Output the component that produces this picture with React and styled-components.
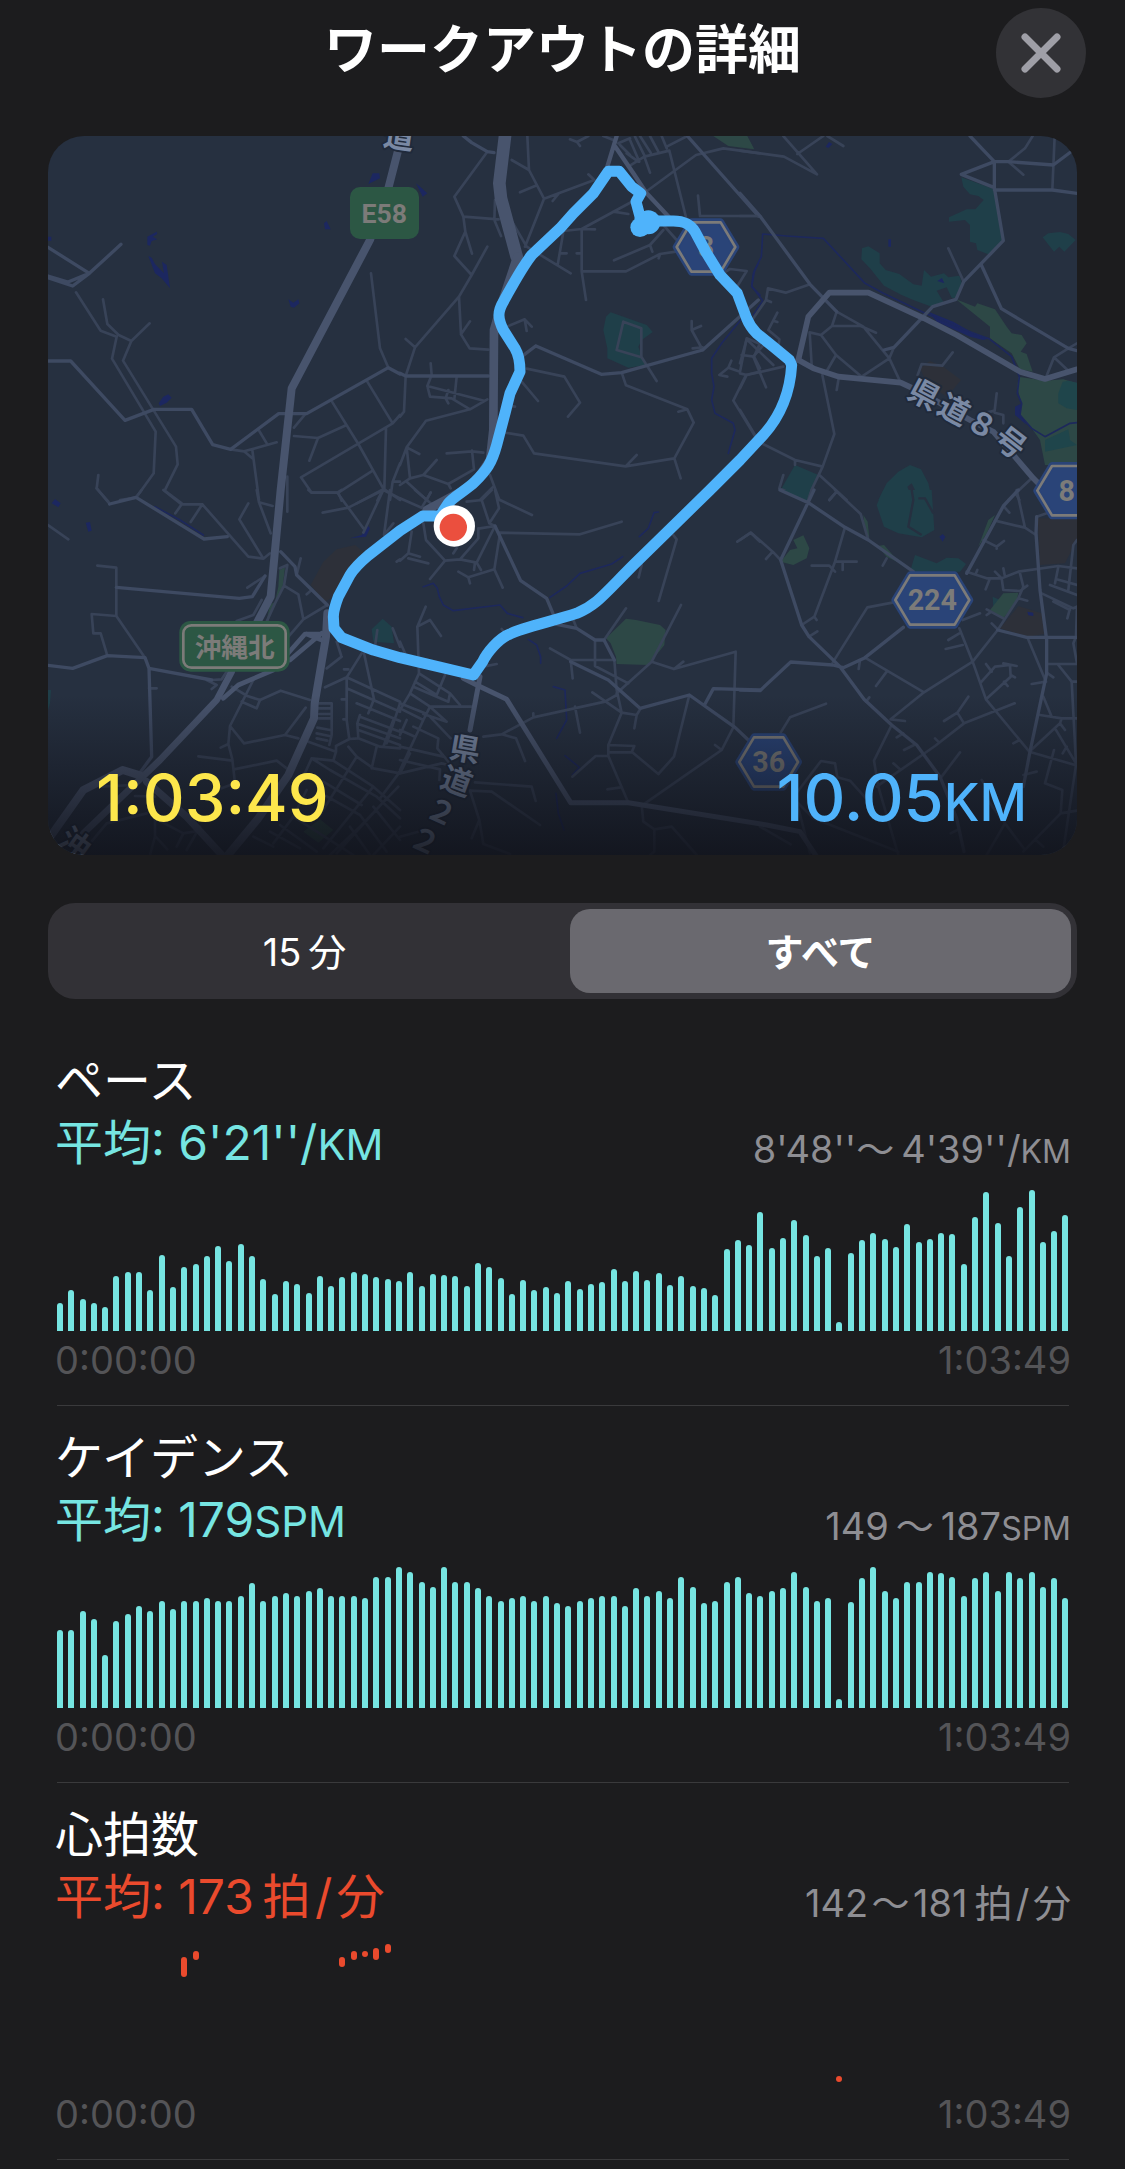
import React, { useState } from "react";
import styled, { createGlobalStyle } from "styled-components";

const GlobalStyle = createGlobalStyle`
  * {
    box-sizing: border-box;
  }

  body {
    margin: 0;
    background: #1c1c1e;
    color: #ffffff;
    font-family: Inter, "Noto Sans CJK JP", sans-serif;
  }

  h1, h2, p {
    margin: 0;
  }
`;

const Page = styled.main`
  padding-bottom: 9px;
`;

const Header = styled.header`
  display: grid;
  grid-template-columns: 90px 1fr 90px;
  padding: 8px 39px 38px;
`;

const Title = styled.h1`
  grid-column: 2;
  text-align: center;
  font-size: 53px;
  font-weight: 700;
  line-height: 84px;
`;

const CloseButton = styled.button`
  display: flex;
  justify-content: center;
  align-items: center;
  width: 90px;
  height: 90px;
  padding: 0;
  border: none;
  border-radius: 50%;
  background: #323236;
  color: #9f9fa7;
  cursor: pointer;
`;

const Content = styled.div`
  padding: 0 48px;
`;

const MapCard = styled.div`
  position: relative;
  overflow: hidden;
  border-radius: 36px;
  background: #263040;

  svg {
    display: block;
    width: 100%;
  }
`;

const MapSummary = styled.div`
  position: absolute;
  left: 0;
  right: 0;
  bottom: 0;
  display: flex;
  justify-content: space-between;
  align-items: flex-end;
  height: 160px;
  padding: 0 50px 17px 48px;
  background: linear-gradient(rgba(16, 18, 26, 0), rgba(16, 18, 26, 0.86));
`;

const MapValue = styled.p`
  color: ${(props) => props.$color};
  font-size: 65px;
  font-weight: 500;
  line-height: 80px;
`;

const Unit = styled.span`
  font-size: ${(props) => props.$size};
  line-height: 1;
`;

const Segments = styled.div`
  display: flex;
  gap: 15px;
  margin-top: 48px;
  padding: 6px;
  border-radius: 27px;
  background: #323136;
`;

const Segment = styled.button`
  flex: 1;
  height: 84px;
  padding: 0 0 4px;
  border: none;
  border-radius: 20px;
  background: ${(props) => (props.$active ? "#6a696f" : "transparent")};
  color: #ffffff;
  font-family: inherit;
  font-size: 38px;
  font-weight: ${(props) => (props.$active ? 700 : 400)};
  cursor: pointer;
`;

const SectionList = styled.div`
  margin-top: 30px;
`;

const Section = styled.section`
  margin: 0 8px 0 9px;
  padding: 21px 0 23px;
  border-bottom: 1px solid #3a3a3c;
`;

const SectionTitle = styled.h2`
  margin: 0 -2px;
  font-size: 48px;
  font-weight: 400;
  line-height: 62px;
`;

const StatRow = styled.div`
  display: flex;
  justify-content: space-between;
  align-items: flex-start;
  height: 62px;
  margin: 0 -2px;
`;

const Average = styled.p`
  color: ${(props) => props.$color};
  font-size: 48px;
  line-height: 62px;
`;

const Range = styled.p`
  color: #8e8e93;
  font-size: 38px;
  line-height: 74px;
`;

const Chart = styled.div`
  display: flex;
  justify-content: space-between;
  align-items: flex-end;
  height: 141px;
  margin-top: 16px;
`;

const Bar = styled.div`
  width: 6px;
  border-radius: ${(props) => (props.$floating ? "3px" : "3px 3px 0 0")};
  background: ${(props) => props.$color};
`;

const TimeAxis = styled.div`
  display: flex;
  justify-content: space-between;
  margin: 7px -2px 0;
  color: #545457;
  font-size: 38px;
  line-height: 44px;
`;

const TEAL = "#76e5e2";
const RED = "#ea4a2d";

const PACE = [
  28, 41, 32, 28, 24, 55, 59, 59, 41, 76, 44, 64, 67, 75, 85, 70, 87, 75, 52,
  37, 50, 47, 38, 55, 45, 54, 59, 57, 54, 52, 50, 59, 45, 57, 56, 55, 45, 68,
  64, 53, 37, 51, 41, 44, 38, 50, 42, 47, 49, 62, 50, 60, 51, 58, 46, 55, 45,
  43, 36, 82, 91, 86, 119, 83, 93, 111, 96, 75, 83, 9, 78, 91, 98, 92, 84, 107,
  89, 92, 98, 97, 67, 114, 139, 108, 75, 124, 141, 89, 100, 116,
];

const CADENCE = [
  78, 78, 97, 89, 53, 87, 94, 102, 97, 107, 99, 107, 107, 110, 107, 107, 112,
  125, 107, 112, 115, 112, 117, 120, 112, 112, 112, 110, 131, 131, 141, 136,
  126, 121, 141, 126, 126, 120, 112, 107, 110, 112, 107, 112, 105, 102, 107,
  110, 112, 112, 102, 120, 112, 117, 110, 131, 121, 105, 107, 126, 131, 115,
  112, 117, 120, 136, 121, 107, 110, 9, 106, 130, 141, 117, 110, 126, 126, 136,
  135, 131, 112, 130, 136, 117, 136, 130, 136, 121, 130, 110,
];

// slot: [low, length], the other slots have no heart rate sample
const HEART_SAMPLES = {
  11: [108, 20],
  12: [125, 9],
  25: [118, 10],
  26: [125, 9],
  27: [128, 6],
  28: [125, 12],
  29: [132, 9],
  69: [3, 6],
};

const HEART = Array.from({ length: 90 }, (_, i) => HEART_SAMPLES[i] || [0, 0]);

// \u2009 (thin) and \u200a (hair) spaces separate numbers and Japanese units
const SECTIONS = [
  {
    id: "pace",
    title: "ペース",
    color: TEAL,
    average: "6'21''/",
    range: "8'48''〜\u20094'39''/",
    unit: "KM",
    bars: PACE.map((value) => [0, value]),
  },
  {
    id: "cadence",
    title: "ケイデンス",
    color: TEAL,
    average: "179",
    range: "149\u2009〜\u2009187",
    unit: "SPM",
    bars: CADENCE.map((value) => [0, value]),
  },
  {
    id: "heart",
    title: "心拍数",
    color: RED,
    average: "173\u2009拍\u200a/\u200a分",
    range: "142\u200a〜\u200a181\u2009拍\u200a/\u200a分",
    unit: "",
    floating: true,
    bars: HEART,
  },
];

// the map is stored as six tiles, each with its own origin
const TILES = [
  {
    x: 0,
    y: 0,
    water:
      "M985 162L998 130H1018L1020 145ZM852 280L860 273L872 298L855 298ZM745 508L760 518L775 508L778 520L762 533L752 530ZM322 320L350 305L352 312L338 320L352 328L335 333L330 347L322 345ZM325 378L335 383L345 402L372 430L366 395L380 405L390 475L365 445L345 430ZM356 820L370 800L385 793L395 803L380 818L360 828ZM24 320H34V332H24Z",
    mid: "M24 352L148 430L243 343M24 438L84 456L148 430L98 468L24 443M24 693H92L255 871L342 838H455L518 944L572 958L716 851H800L1045 713L1080 732",
    minor:
      "M108 487L182 602L230 620L216 686L347 905L341 1030L288 1103L240 1110M189 508L202 582L236 615L274 633L329 580M274 633L249 692L408 950L413 1003L374 1082L425 1120M175 1035L170 1075L205 1115M572 958L612 964L710 937M656 900L682 943M612 964L637 985M637 960L657 1110M993 430L1020 655L1045 713M980 752L1058 880M876 815L955 942L1030 1076L1080 1110M762 918L834 924L918 886M834 924L808 992M762 893L797 851M1080 855L1058 880L783 1042L815 1088H895L998 1022M895 1088L905 1112M1038 895L1033 1076L950 1120M1030 1076L1012 1112M1080 1000L1058 1055H1080M1058 1055L1050 1110M742 1040V1145",
  },
  {
    x: 1080,
    y: 0,
    teal: "M632 547L740 585L758 606L725 630L715 650L735 705L685 713L622 685V655L610 600L618 560Z",
    green: "M940 18H1040L1062 58L985 48Z",
    water: "M48 160L62 172L82 190L68 200Z",
    stream:
      "M1075 400L1060 430L1055 470L1080 495M1022 570L965 640L935 685V730L942 770L935 810L945 850L1000 880L1005 900L985 970",
    mid: "M190 18L215 38L262 65L282 68M17 738H265M0 730L17 738M408 648L604 733L665 728L908 660L1075 510M407 648L365 680M862 18L1075 258",
    minor:
      "M262 65L163 200L190 260L296 268M190 260L196 305L216 371M196 305L163 378L215 435L262 350M215 435L177 500L45 652L17 738L12 845L0 860M177 500L183 613L209 655L265 659M183 613L210 574M17 627L45 652M285 210L283 270L303 318M382 18L387 120L432 206L375 350M335 90L387 120M432 206L583 150L565 133M458 213L475 192M360 187L405 168M310 230L380 350L512 430M490 305L473 405M480 370H500M530 370H545M490 303L545 297L700 213M545 297L585 298M640 245L685 252M545 297V424L558 510M545 424H678L780 372L828 365M780 372L776 385M642 391L750 345L757 365M750 345L790 300M510 28L531 36L565 18M531 36L540 48M700 213L888 75L970 55L1080 70M685 110L733 80L808 62L860 270M733 80L750 128M640 30L610 18M655 40L690 25M1075 258H900L894 197M690 30L718 95M705 20L735 80M720 18L752 68M750 18L775 65M785 18L800 55M800 50L862 18M660 45L690 75M680 70L715 95M790 285L830 330M325 588L374 568L395 590M374 568L380 603M908 660L875 600V573M875 600L903 588M908 652L878 655M665 728L678 766L862 838L881 878L823 985L842 1045M862 838L835 845M823 985L677 1009L402 970L370 917L315 908M677 1009L710 975M380 716L493 740L540 818L504 860M365 755L414 813M345 830L320 826M724 680L770 753M670 575L724 595V682L650 660ZM960 435L990 417L1040 423L1005 480M1075 640L1040 625L1020 725L985 713L958 735L982 740M985 713L994 692M1080 725L1038 735L1000 812L1065 918M1025 675L1062 680L1080 640M1062 680L1080 715M92 700L95 735L82 768L90 800L155 805L210 838L262 808M82 768L252 812M170 740L163 808M145 780L137 805L145 820M210 838L78 872L20 952L0 1005M20 952L58 972M20 952L30 1045L70 1035L110 990M70 1035L145 1062L222 1018L216 962M145 1062L152 1075M140 970L216 964L250 968M0 1065L30 1045M20 1055L80 1110M270 1035L298 1110M280 1070L240 1110M92 1087L80 1110",
  },
  {
    x: 2100,
    y: 0,
    teal: "M664 142L763 178L790 332L745 373L712 360L708 340L690 335V285L675 270L627 275V262L680 238H706L731 210L715 198L690 193L670 170ZM366 355L385 349L419 370V400L437 420L478 432L520 463L545 467L552 420L573 440L612 430L625 442L658 437L668 465L648 505L635 503L620 472L590 482L610 515L575 530L520 510L485 495L432 467L390 415L364 388ZM908 322L925 310L960 306L985 312L1007 330L973 365L958 350L942 365ZM415 1110L440 1060L475 1025L510 1005L543 1018L565 1060L576 1110H540L515 1060L502 1070L518 1110ZM165 1005L235 1035L205 1110L125 1075Z",
    green:
      "M0 18H22L42 56L0 50ZM648 508L705 530L712 520L765 538L800 590L815 610L845 615L860 640L842 665L860 672L878 725L840 718L815 670L750 625V590L700 550ZM835 740L915 752L970 748L1011 760V1005H915L900 930L875 895L838 855L845 820L832 775Z",
    pond: "M955 790L968 755L985 752L1011 758V840L980 835L955 820ZM915 930L985 898L990 930L1011 945L915 965Z",
    brown: "M540 715L570 693L610 710L663 750L630 790L620 800L560 760Z",
    water:
      "M257 50L267 36L277 42L265 54ZM445 328H453V350H445ZM592 453L606 444L613 460ZM565 545L640 575L700 610L750 625L730 630L690 620L590 575ZM825 830L845 820L840 850L860 885L825 855Z",
    stream:
      "M40 555L68 512L35 468L44 420L64 380L68 312L140 318L250 325L375 460L430 490L555 550L690 605L750 628L815 680L838 740L832 790L845 820L840 855L875 895L915 920L990 880L1011 878",
    mid: "M690 18L763 95H805L940 105L1000 60M763 95L664 133L763 173V95M763 180H937L1011 190M763 173L790 332L671 455L648 508L578 530L540 570L462 652L432 660M724 405L784 536L985 655L1011 662M0 190L60 258L210 463L290 545",
    minor:
      "M0 62L132 80L231 133L130 18M172 72L250 18M262 18L310 48M805 95L850 134M805 95L855 55L878 18M944 18L937 180M625 355L671 455M985 655L942 682L917 745M942 682L985 722M985 655L1011 640M290 545L370 590L448 685L482 758M0 258H60M210 463L137 488L84 475L78 510L40 565M78 510L93 516M290 545L276 588L243 615L209 607L215 705M276 588H362L408 608M243 615L288 675L365 740L448 685L462 652M288 675L262 720M247 735L283 912L248 1010L200 1110M0 840L45 915M45 930L165 990L248 1010M165 990V1005M290 780L296 745M638 667L607 707L545 702L533 735M770 790L764 842L730 850M764 848L790 855V880M112 548L85 600L118 628L115 650M100 572L112 576M20 628L0 700M40 680L85 628M40 680L78 772M20 628L100 705M0 730L20 735L130 710M0 775L20 735M238 1035L320 1110M290 1085L268 1110M130 1035L118 1075L190 1108M875 1045L805 1110M830 1095L838 1110",
  },
  {
    x: 0,
    y: 1080,
    teal: "M995 418L1028 386L1055 410L1062 460L1000 455ZM24 600H33L30 640L24 660Z",
    green:
      "M718 240L735 232L728 290L705 335L715 290ZM690 345L705 335L685 395L680 390ZM790 1025L840 988L880 1020L835 1058Z",
    brown: "M812 285L850 215L890 178L945 165L975 190L930 240L880 320L855 335Z",
    water:
      "M35 40L45 27L62 40L55 52ZM137 98L150 96L155 122L145 125ZM970 125L985 108L990 115L978 140L930 145L965 135Z",
    stream: "M345 50L420 90L490 135",
    mid: "M209 42L288 22L492 147L562 140M229 292L598 325L637 320L675 258M327 535L335 800L302 845M24 526L98 535L202 497L315 503L327 535L515 570M722 185L765 230L770 255L862 345",
    minor:
      "M170 -5L209 42M288 22L305 0M370 0L425 43L406 70M425 43H487L452 96M487 43L625 200L670 206L598 88L625 40M650 0L657 37L692 130M657 37L698 48M670 206L690 190M24 105L85 148M172 227L229 233V378L155 372L160 430H182L202 497M675 258L622 293M229 378L315 503M327 595H350M515 570L545 568L560 545M500 570L530 585L515 597M770 255L782 205M720 235L742 225L732 287L775 313L790 388M862 345L790 388L728 460M732 287L705 340L680 395M800 313L815 300M665 330L640 375L590 393M575 590L622 618L660 630L722 602L810 630M660 630L650 655L605 635M640 570L570 708L612 760L735 735L797 653M735 735L775 745M570 708L565 762L577 808L585 880L545 895M565 762L542 773M475 799L577 812M582 838L710 812L740 835M855 592L920 562M905 500L860 535M890 455L903 495M965 490L920 562V690L928 747L888 768M972 490L1002 628L985 670M920 562L1080 635M920 595L1080 665M950 640L1080 693M960 680L1080 725M960 675L952 700L955 745M955 720L1080 765M955 702L1080 745M928 747L955 745L1020 770L1080 775M905 628H920M910 688H920M912 538H925M1080 640L1040 760M1060 690L1030 770M835 640H875V735L868 765M835 655H875M838 672H870M835 685H870M832 713L870 720M830 730L868 738M830 745L862 752M805 755L888 785V768M888 785L880 812L815 805L790 860M925 770L950 800L1000 835L1080 850M1010 770L995 835M950 800L840 975M880 812L1000 890L1080 960M815 805L870 840L1010 920L1080 985M850 875L965 945M835 905L960 975M800 900L760 980L940 1095M720 1005L830 1085M760 980L700 1060M690 1025L780 1075M1000 890L850 1075M1040 925L890 1090M1075 890L960 1010L870 1095M960 975L1040 1085M1000 950L1080 1050M930 1010L990 1095M1080 845L1020 925M1080 1010L1000 1095M640 1040L700 1070M345 960V1040L330 1095M347 1040L382 1078M345 985L430 1030L480 1022M430 1030L410 1070M480 1010L440 1080M285 918L345 920M150 1060L200 1000L320 970M180 890L280 885M805 0L815 8L892 8L970 115M892 8L905 0M1030 0L925 53L848 68M1030 0L970 128M1050 0L1032 135L1060 100M1030 0L1080 25M1070 215L1080 208M1012 420L1005 470M1058 415L1080 470",
  },
  {
    x: 1080,
    y: 1080,
    green:
      "M618 445L678 386L708 390L780 405L797 420L793 465L745 525L650 522L648 500L632 460Z",
    stream:
      "M70 290L100 280L112 295L118 320L130 345L160 362L300 345L322 370L368 383M450 322L500 288L540 250L635 222L668 200M718 140L745 115L762 68L775 66M460 590L495 600L500 690L470 745M385 448L410 465L422 500V520M495 797L538 832L517 855M468 910L475 970L492 1020",
    mid: "M285 108L362 272L440 325L465 385M470 403L530 415L585 450H612L643 510M512 515L625 570L720 655L868 615L1005 712L1045 750M915 642L940 596L1080 600",
    minor:
      "M0 25L65 53L92 8M45 0L92 40M200 35L245 30L275 0M245 30L268 100L297 55L285 0M300 30L396 75M240 115L285 108L268 100M298 128L540 133L665 95M300 130L283 238L308 293M285 108L230 218L180 208L135 212L78 150L70 100M35 125L25 190L0 212M25 190L60 200M25 205L85 220M135 212L90 267M180 208L235 145V115M230 218L243 240M222 240L225 218M175 245L205 262L283 238M205 262L210 280M160 190L170 175M77 350L52 410L57 550M52 410L90 390L123 438M0 455L15 490M305 417L315 430M250 530L290 522M612 450L678 355M585 450V528L685 580M643 510H512L450 475M512 510L518 565M643 510L650 600L665 668L625 765V798L685 938M650 610L755 515L822 537L1007 485L1000 712L965 780L735 940M755 515L843 345M822 537L850 515M650 615L615 635L400 682L305 733L250 740M400 682V670M305 733L348 745L375 813M525 650L540 728M577 607L665 668L710 675L722 655M710 675L703 715M625 765L703 768L695 787H625M695 785L775 852L822 800L868 615M625 798H587L517 860M622 898L662 892M945 765L965 780M725 945L730 995L763 1018L815 1010L890 1095M763 1018V1085L750 1095M820 135L830 148L776 333M725 225L716 262M520 390L530 415M1012 155L1052 128L1080 155M225 877L395 890L407 933M210 902L275 905L420 1005M210 902L238 990L215 1045M238 990L250 1062L330 1092M0 1040L55 1025M0 850L125 820L145 825M57 550L30 610L0 660M57 550L150 610L180 645M45 575L110 615L135 555M40 590L145 635L150 610M30 610L90 650H215M90 650L70 690L0 840M90 650L140 695L70 672M0 640L75 670M0 655L70 690M90 680L152 745M40 710L115 745L112 775L145 815M0 720L45 740M0 770L130 800M30 790L0 850M0 810L120 838L118 870M20 690L0 735",
  },
  {
    x: 2100,
    y: 1080,
    teal: "M410 45L430 0H575L583 120L545 142L475 130L432 110ZM525 195L590 220L620 203L655 205L678 222L660 245H510ZM758 320L780 330L760 350ZM120 0H210L200 32Z",
    green:
      "M122 215L150 180L172 175L160 150L190 136L208 175L200 205L160 225ZM413 168L432 165L480 220L440 200ZM370 75L383 95L388 145L375 120ZM715 170L745 90L765 75L740 130ZM750 360L790 310L835 308L830 335L790 385Z",
    brown:
      "M893 85H1011V150L975 220L900 225ZM780 415L835 348L905 370L912 432L865 440Z",
    water:
      "M598 140L608 132L616 140L608 155ZM862 365L880 368L880 378L865 376Z",
    mid: "M0 600L60 602L152 516L278 525L310 533L375 503L490 412M222 0L122 210L185 405L207 440L300 530L372 628L455 705L530 765L600 860L650 985L672 1085M120 0L205 38L315 112L385 150L520 245M890 80L888 130L900 300L920 450V550L870 785L850 890M835 0L790 48L680 250M773 420L860 442L1011 442",
    minor:
      "M0 150L33 128L98 185L78 207M98 185L122 210M185 405L223 380L230 390M207 440L232 424M223 380L285 215H350M215 227H268L285 245M308 220V240M285 215L315 112M285 0L362 72L385 150M268 30L290 5M440 205L428 227M278 518L382 352L457 338M360 510L356 537M375 503L552 607L452 688L495 693M440 545L408 588M552 607L698 515L773 420M658 415L698 515L738 628L868 785L1005 825M658 430L625 450M617 477L668 465M668 390L720 370M738 628L812 560L810 525L765 530L722 578M755 545L738 522M830 528L790 520M812 555L825 562M792 575L803 588M388 622L378 635M455 705L402 812L415 890L475 1095M490 730L470 742M522 765L492 780M824 640L672 700L585 768L410 890M672 700L652 668L612 693M652 668L685 620M598 758L585 745M460 820L480 838M605 860L660 787M632 1030L652 1020M122 728L150 682L258 641M165 915L243 813L285 820L292 862L330 872L400 950M165 915L210 1090M165 930L220 985L475 1085M60 1010L152 1063M680 245L740 265H785L835 245L955 228L1011 235M790 48L808 68M765 92L855 113L888 135M830 0L855 113M890 80L920 70M850 855L890 845M730 150L770 170L792 153M770 170V176M712 240L707 252M750 265L737 298M765 245L785 265L790 300L840 303L862 287M790 235L795 260M840 250L850 290L835 325L862 332M835 325L773 420M740 358L790 385M740 375L750 368M755 400L770 415M862 442L918 575L875 582M920 522H1011M955 525L995 575L1008 820M995 575H1011M910 620L935 680M900 675L965 685H1011M965 685L960 700L868 785M960 700L975 720M945 715L1008 820M968 790L980 770M820 760L838 750M905 310L1000 355L1011 350M955 230L945 280M950 268L1011 285M930 285L1011 315M1011 150L1000 165L985 300M993 230L988 270M940 335L990 360M982 385L990 355M1011 350L1008 440L1000 460L1011 520M942 780L915 880L967 900L962 970L850 1085M962 970L1011 962M725 870L735 885M740 1095L795 1000L735 920M795 1000L855 1080M885 1048L910 1070M1008 825L970 1080M920 548L940 562",
  },
];

const HIGHWAYS = [
  [24, "M1074 62L1045 175L990 330L755 775L722 1080L692 1400L650 1480"],
  [20, "M575 1625L530 1710L360 1890L130 2110"],
  [38, "M1396 10L1378 160L1383 205L1430 380"],
  [26, "M1432 380L1385 520L1362 600L1360 900L1350 990L1300 1065L1160 1140"],
  [24, "M862 1450L858 1520L824 1720L822 1765L745 1935L655 2065L560 2180"],
  [22, "M550 2180L440 2060L320 1955"],
  [24, "M24 2130L130 1980L248 1920L300 1936"],
  [14, "M550 1705L595 1665L700 1620L795 1512H845M750 1590L845 1510M845 1530L800 1512"],
  [15, "M1270 1645L1310 1665L1400 1708L1592 2018H1765L2180 2085L2280 2105L2330 2180"],
  [15, "M1320 1640L1290 1800"],
  [13, "M1730 18L1702 110M1726 50L1780 130L1820 190L1900 275"],
  [17, "M2275 690L2305 560L2368 488H2485L2652 565L2750 615L2940 725L3015 747L3111 718"],
  [17, "M2275 690L2320 715L2395 740L2582 758L2640 785L2790 870L2860 905L2920 975L2980 1045L3000 1065"],
];

const ROUTE =
  "M1243 1188L1200 1158H1148L1080 1202L985 1276Q945 1310 930 1335L895 1400Q880 1440 880 1460L882 1495L905 1523L1000 1560L1080 1583L1300 1635L1328 1595C1340 1570 1375 1525 1410 1512C1440 1495 1540 1473 1610 1450C1670 1425 1690 1395 1780 1305L2010 1080L2100 990L2170 915C2220 860 2250 790 2255 705L2248 690L2200 650L2150 610Q2130 590 2120 565L2092 490L2040 435L2000 370L1965 305C1950 280 1930 273 1900 273H1840L1800 285V260L1788 215L1802 190L1775 170L1738 124H1705L1660 190L1600 250L1560 295L1475 375C1440 420 1410 480 1390 515C1372 545 1373 565 1390 600L1425 655Q1440 680 1440 725L1410 790L1395 850L1370 945C1355 1000 1340 1020 1305 1055C1280 1080 1240 1100 1225 1120L1200 1158";

const LABEL_FONT = 'Roboto, "Noto Sans CJK JP", sans-serif';

function RouteShield({ x, y, width, label }) {
  const hex = (w, h, cut) =>
    `M${x - w} ${y}L${x - w + cut} ${y - h}H${x + w - cut}L${x + w} ${y}L${
      x + w - cut
    } ${y + h}H${x - w + cut}Z`;
  const half = width / 2;

  return (
    <g strokeLinejoin="round">
      <path d={hex(half - 8, 76, 46)} fill="#2a4478" stroke="#2a4478" strokeWidth="20" />
      <path d={hex(half - 10, 74, 44)} fill="none" stroke="#7c7b79" strokeWidth="8" />
      <text
        x={x}
        y={y + 30}
        fill="#7c7b79"
        fontFamily={LABEL_FONT}
        fontSize="86"
        fontWeight="700"
        textAnchor="middle"
      >
        {label}
      </text>
    </g>
  );
}

function RoadLabel({ x, y, turn, children }) {
  return (
    <text
      transform={`translate(${x} ${y}) rotate(${turn})`}
      y="34"
      fill="#7a89a4"
      stroke="#202a3b"
      strokeWidth="12"
      strokeLinejoin="round"
      paintOrder="stroke"
      fontFamily='"Noto Sans CJK JP", sans-serif'
      fontSize="92"
      fontWeight="700"
      textAnchor="middle"
    >
      {children}
    </text>
  );
}

function RouteMap() {
  return (
    <svg viewBox="24 18 3087 2157" role="img" aria-label="ルートマップ">
      {TILES.map((tile) => (
        <g
          key={`${tile.x}-${tile.y}`}
          transform={`translate(${tile.x} ${tile.y})`}
          fill="none"
          strokeLinecap="round"
          strokeLinejoin="round"
        >
          <path d={tile.brown} fill="#2d3039" />
          <path d={tile.teal} fill="#1f3f49" />
          <path d={tile.green} fill="#2d4846" />
          <path d={tile.pond} fill="#1f454b" />
          <path d={tile.water} fill="#1c2760" />
          <path d={tile.stream} stroke="#1d285c" strokeWidth="5" />
          <path d={tile.minor} stroke="#384358" strokeWidth="8" />
          <path d={tile.mid} stroke="#3e4a62" strokeWidth="10" />
        </g>
      ))}
      <path
        d="M2615 1080L2620 1110L2605 1190L2645 1215M2635 1105L2655 1105L2680 1150"
        fill="none"
        stroke="#263040"
        strokeWidth="7"
      />
      <g fill="none" stroke="#48546d" strokeLinecap="round" strokeLinejoin="round">
        {HIGHWAYS.map(([width, d]) => (
          <path key={d} d={d} strokeWidth={width} />
        ))}
      </g>

      {/* 道路標識 */}
      <rect x="930" y="171" width="207" height="156" rx="30" fill="#2c5744" />
      <text
        x="1033"
        y="278"
        fill="#7c7b79"
        fontFamily={LABEL_FONT}
        fontSize="80"
        fontWeight="700"
        textAnchor="middle"
      >
        E58
      </text>
      <rect x="418" y="1473" width="331" height="152" rx="34" fill="#2c5744" />
      <rect
        x="430"
        y="1486"
        width="307"
        height="127"
        rx="24"
        fill="none"
        stroke="#7c7b79"
        strokeWidth="8"
      />
      <text
        x="584"
        y="1580"
        fill="#7c7b79"
        fontFamily='"Noto Sans CJK JP", sans-serif'
        fontSize="80"
        fontWeight="700"
        textAnchor="middle"
      >
        沖縄北
      </text>
      <RouteShield x={1998} y={351} width={196} label="8" />
      <RouteShield x={3080} y={1082} width={196} label="8" />
      <RouteShield x={2677} y={1410} width={242} label="224" />
      <RouteShield x={2186} y={1896} width={196} label="36" />

      <RoadLabel x={1077} y={19} turn={8}>道</RoadLabel>
      <RoadLabel x={2653} y={792} turn={28}>県</RoadLabel>
      <RoadLabel x={2742} y={838} turn={28}>道</RoadLabel>
      <RoadLabel x={2826} y={882} turn={28}>８</RoadLabel>
      <RoadLabel x={2912} y={937} turn={38}>号</RoadLabel>
      <RoadLabel x={1275} y={1856} turn={10}>県</RoadLabel>
      <RoadLabel x={1250} y={1953} turn={20}>道</RoadLabel>
      <RoadLabel x={1204} y={2045} turn={25}>２</RoadLabel>
      <RoadLabel x={1155} y={2132} turn={25}>２</RoadLabel>
      <RoadLabel x={105} y={2140} turn={36}>沖</RoadLabel>

      {/* 走ったルート */}
      <path
        d={ROUTE}
        fill="none"
        stroke="#4fb3fb"
        strokeWidth="33"
        strokeLinecap="round"
        strokeLinejoin="round"
      />
      <circle cx="1800" cy="292" r="29" fill="#4fb3fb" />
      <circle cx="1825" cy="277" r="36" fill="#4fb3fb" />
      <circle cx="1243" cy="1188" r="62" fill="#ffffff" />
      <circle cx="1240" cy="1192" r="41" fill="#eb4f3e" />
    </svg>
  );
}

function StatSection({ section }) {
  return (
    <Section>
      <SectionTitle>{section.title}</SectionTitle>
      <StatRow>
        <Average $color={section.color}>
          平均: {section.average}
          <Unit $size="42px">{section.unit}</Unit>
        </Average>
        <Range>
          {section.range}
          <Unit $size="32px">{section.unit}</Unit>
        </Range>
      </StatRow>
      <Chart>
        {section.bars.map(([low, length], index) => (
          <Bar
            key={index}
            $color={section.color}
            $floating={section.floating}
            style={{ height: length, marginBottom: low }}
          />
        ))}
      </Chart>
      <TimeAxis>
        <span>0:00:00</span>
        <span>1:03:49</span>
      </TimeAxis>
    </Section>
  );
}

function App() {
  const [span, setSpan] = useState("all");

  return (
    <>
      <GlobalStyle />
      <Page>
        <Header>
          <Title>ワークアウトの詳細</Title>
          <CloseButton type="button" aria-label="閉じる">
            <svg width="40" height="40" viewBox="0 0 40 40" aria-hidden="true">
              <path
                d="M4 4L36 36M36 4L4 36"
                stroke="currentColor"
                strokeWidth="7"
                strokeLinecap="round"
              />
            </svg>
          </CloseButton>
        </Header>
        <Content>
          <MapCard>
            <RouteMap />
            <MapSummary>
              <MapValue $color="#fde74c">1:03:49</MapValue>
              <MapValue $color="#4fb3fb">
                10.05<Unit $size="52px">KM</Unit>
              </MapValue>
            </MapSummary>
          </MapCard>
          <Segments>
            <Segment
              type="button"
              $active={span === "15"}
              aria-pressed={span === "15"}
              onClick={() => setSpan("15")}
            >
              15{"\u2009"}分
            </Segment>
            <Segment
              type="button"
              $active={span === "all"}
              aria-pressed={span === "all"}
              onClick={() => setSpan("all")}
            >
              すべて
            </Segment>
          </Segments>
          <SectionList>
            {SECTIONS.map((section) => (
              <StatSection key={section.id} section={section} />
            ))}
          </SectionList>
        </Content>
      </Page>
    </>
  );
}

export default App;
